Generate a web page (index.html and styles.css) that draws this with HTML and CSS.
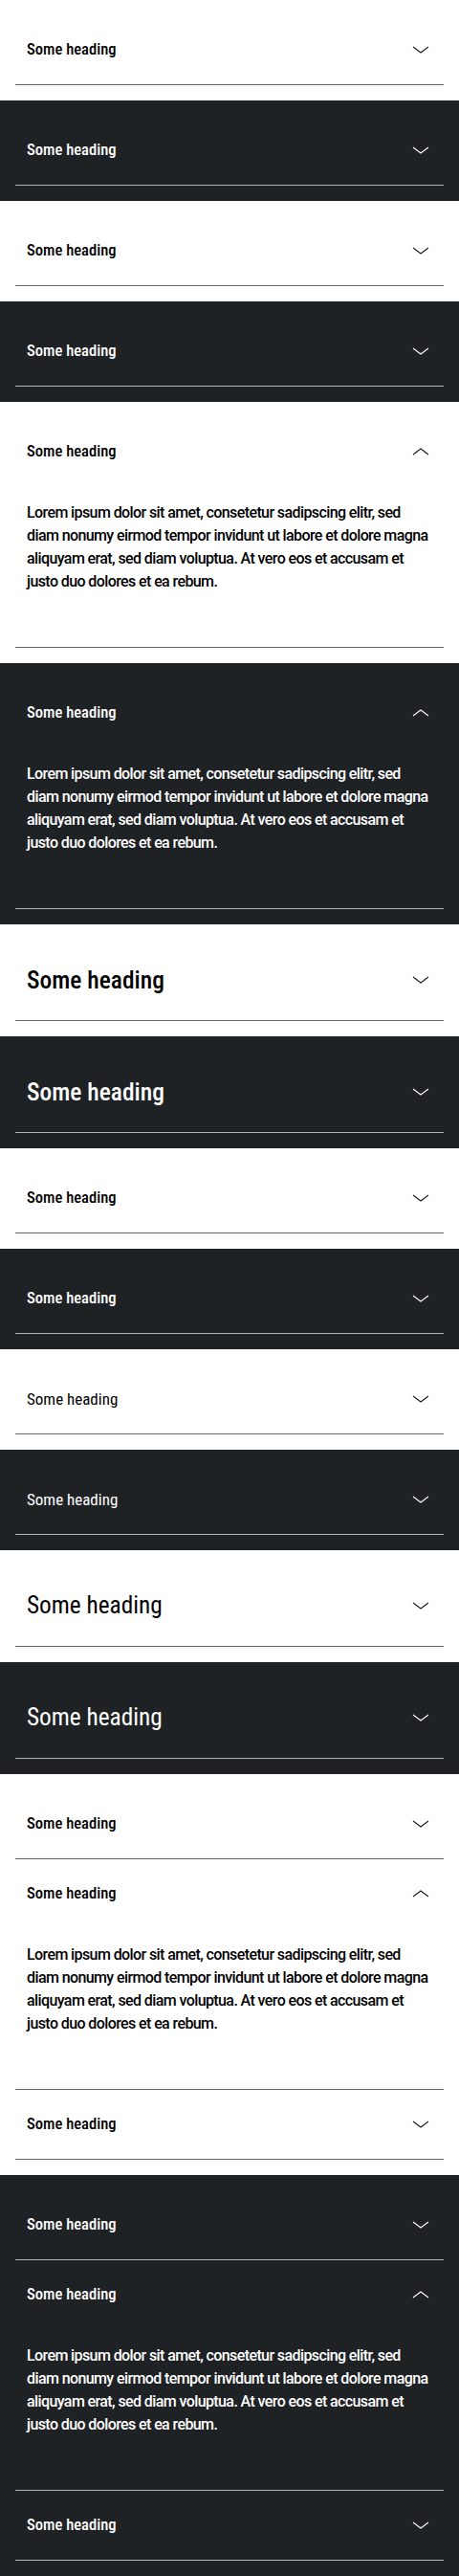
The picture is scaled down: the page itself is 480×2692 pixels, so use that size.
FILE: index.html
```html
<!DOCTYPE html>
<html lang="en">
<head>
<meta charset="utf-8">
<title>Accordion</title>
<link rel="stylesheet" href="styles.css">
</head>
<body>

<section class="panel light">
  <div class="acc">
    <button class="acc-head"><span class="acc-title">Some heading</span><svg class="chev" viewBox="0 0 24 24"><polyline points="4,9 12,15 20,9"/></svg></button>
  </div>
</section>

<section class="panel dark">
  <div class="acc">
    <button class="acc-head"><span class="acc-title">Some heading</span><svg class="chev" viewBox="0 0 24 24"><polyline points="4,9 12,15 20,9"/></svg></button>
  </div>
</section>

<section class="panel light">
  <div class="acc">
    <button class="acc-head"><span class="acc-title">Some heading</span><svg class="chev" viewBox="0 0 24 24"><polyline points="4,9 12,15 20,9"/></svg></button>
  </div>
</section>

<section class="panel dark">
  <div class="acc">
    <button class="acc-head"><span class="acc-title">Some heading</span><svg class="chev" viewBox="0 0 24 24"><polyline points="4,9 12,15 20,9"/></svg></button>
  </div>
</section>

<section class="panel light">
  <div class="acc open">
    <button class="acc-head"><span class="acc-title">Some heading</span><svg class="chev" viewBox="0 0 24 24"><polyline points="4,15 12,9 20,15"/></svg></button>
    <div class="acc-body">Lorem ipsum dolor sit amet, consetetur sadipscing elitr, sed diam nonumy eirmod tempor invidunt ut labore et dolore magna aliquyam erat, sed diam voluptua. At vero eos et accusam et justo duo dolores et ea rebum.</div>
  </div>
</section>

<section class="panel dark">
  <div class="acc open">
    <button class="acc-head"><span class="acc-title">Some heading</span><svg class="chev" viewBox="0 0 24 24"><polyline points="4,15 12,9 20,15"/></svg></button>
    <div class="acc-body">Lorem ipsum dolor sit amet, consetetur sadipscing elitr, sed diam nonumy eirmod tempor invidunt ut labore et dolore magna aliquyam erat, sed diam voluptua. At vero eos et accusam et justo duo dolores et ea rebum.</div>
  </div>
</section>

<section class="panel light">
  <div class="acc large">
    <button class="acc-head"><span class="acc-title">Some heading</span><svg class="chev" viewBox="0 0 24 24"><polyline points="4,9 12,15 20,9"/></svg></button>
  </div>
</section>

<section class="panel dark">
  <div class="acc large">
    <button class="acc-head"><span class="acc-title">Some heading</span><svg class="chev" viewBox="0 0 24 24"><polyline points="4,9 12,15 20,9"/></svg></button>
  </div>
</section>

<section class="panel light">
  <div class="acc">
    <button class="acc-head"><span class="acc-title">Some heading</span><svg class="chev" viewBox="0 0 24 24"><polyline points="4,9 12,15 20,9"/></svg></button>
  </div>
</section>

<section class="panel dark">
  <div class="acc">
    <button class="acc-head"><span class="acc-title">Some heading</span><svg class="chev" viewBox="0 0 24 24"><polyline points="4,9 12,15 20,9"/></svg></button>
  </div>
</section>

<section class="panel light">
  <div class="acc thin">
    <button class="acc-head"><span class="acc-title">Some heading</span><svg class="chev" viewBox="0 0 24 24"><polyline points="4,9 12,15 20,9"/></svg></button>
  </div>
</section>

<section class="panel dark">
  <div class="acc thin">
    <button class="acc-head"><span class="acc-title">Some heading</span><svg class="chev" viewBox="0 0 24 24"><polyline points="4,9 12,15 20,9"/></svg></button>
  </div>
</section>

<section class="panel light">
  <div class="acc large thin">
    <button class="acc-head"><span class="acc-title">Some heading</span><svg class="chev" viewBox="0 0 24 24"><polyline points="4,9 12,15 20,9"/></svg></button>
  </div>
</section>

<section class="panel dark">
  <div class="acc large thin">
    <button class="acc-head"><span class="acc-title">Some heading</span><svg class="chev" viewBox="0 0 24 24"><polyline points="4,9 12,15 20,9"/></svg></button>
  </div>
</section>

<section class="panel light">
  <div class="acc">
    <button class="acc-head"><span class="acc-title">Some heading</span><svg class="chev" viewBox="0 0 24 24"><polyline points="4,9 12,15 20,9"/></svg></button>
  </div>
  <div class="acc open">
    <button class="acc-head"><span class="acc-title">Some heading</span><svg class="chev" viewBox="0 0 24 24"><polyline points="4,15 12,9 20,15"/></svg></button>
    <div class="acc-body">Lorem ipsum dolor sit amet, consetetur sadipscing elitr, sed diam nonumy eirmod tempor invidunt ut labore et dolore magna aliquyam erat, sed diam voluptua. At vero eos et accusam et justo duo dolores et ea rebum.</div>
  </div>
  <div class="acc">
    <button class="acc-head"><span class="acc-title">Some heading</span><svg class="chev" viewBox="0 0 24 24"><polyline points="4,9 12,15 20,9"/></svg></button>
  </div>
</section>

<section class="panel dark">
  <div class="acc">
    <button class="acc-head"><span class="acc-title">Some heading</span><svg class="chev" viewBox="0 0 24 24"><polyline points="4,9 12,15 20,9"/></svg></button>
  </div>
  <div class="acc open">
    <button class="acc-head"><span class="acc-title">Some heading</span><svg class="chev" viewBox="0 0 24 24"><polyline points="4,15 12,9 20,15"/></svg></button>
    <div class="acc-body">Lorem ipsum dolor sit amet, consetetur sadipscing elitr, sed diam nonumy eirmod tempor invidunt ut labore et dolore magna aliquyam erat, sed diam voluptua. At vero eos et accusam et justo duo dolores et ea rebum.</div>
  </div>
  <div class="acc">
    <button class="acc-head"><span class="acc-title">Some heading</span><svg class="chev" viewBox="0 0 24 24"><polyline points="4,9 12,15 20,9"/></svg></button>
  </div>
</section>

</body>
</html>
```
FILE: styles.css
```css
* { box-sizing: border-box; }

html, body {
  margin: 0;
  padding: 0;
  background: #ffffff;
}

body {
  width: 480px;
  font-family: "Roboto", "Liberation Sans", sans-serif;
}

.panel {
  padding: 16px;
}

.panel.light {
  background: #ffffff;
  color: #000000;
}

.panel.dark {
  background: #1f2225;
  color: #ffffff;
}

.acc {
  border-bottom: 1px solid #646669;
}

.dark .acc {
  border-bottom-color: #b0b1b3;
}

.acc-head {
  display: flex;
  align-items: center;
  justify-content: space-between;
  width: 100%;
  margin: 0;
  padding: 24px 12px;
  border: 0;
  background: transparent;
  color: inherit;
  text-align: left;
  cursor: pointer;
}

.acc-title {
  font-family: "Roboto Condensed", "Roboto", sans-serif;
  font-weight: 500;
  font-size: 16.6px;
  line-height: 24px;
  letter-spacing: 0;
}

.thin .acc-title {
  font-weight: 400;
  font-size: 17px;
}

.large .acc-title {
  font-size: 25.5px;
  line-height: 36px;
}

.large.thin .acc-title {
  font-size: 25.3px;
}

.chev {
  width: 24px;
  height: 24px;
  flex: 0 0 24px;
  fill: none;
  stroke: #1c1d1f;
  stroke-width: 1.1;
}

.dark .chev {
  stroke: #ffffff;
}

.acc-body {
  padding: 16px 12px 56px;
  font-family: "Roboto", sans-serif;
  font-weight: 500;
  font-size: 16px;
  line-height: 24px;
  letter-spacing: -0.6px;
}
```
